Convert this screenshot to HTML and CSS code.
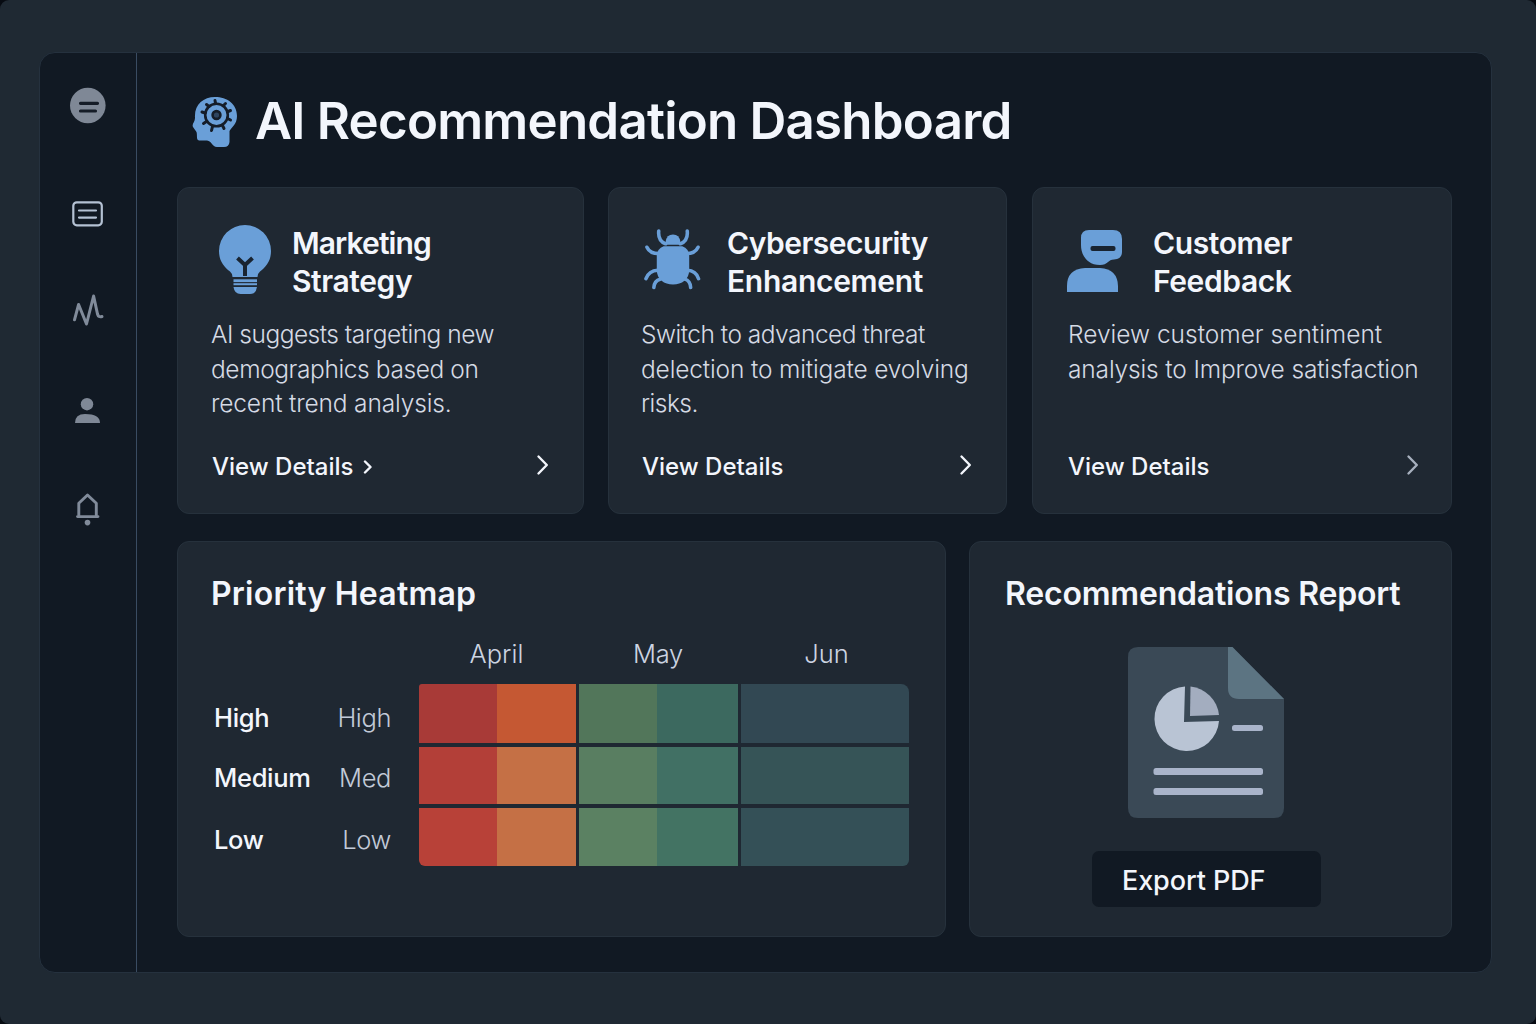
FILE: index.html
```html
<!DOCTYPE html>
<html lang="en">
<head>
<meta charset="utf-8">
<title>AI Recommendation Dashboard</title>
<link rel="stylesheet" href="styles.css">
</head>
<body>
<div class="screen">
<div class="app">
  <nav class="sidebar">
    <svg class="nav-icon" viewBox="0 0 40 40"><circle cx="19.8" cy="19.5" r="17.8" fill="#7f8896"/><path d="M12.500 17.300h17M12.500 25h15" stroke="#151c27" stroke-width="3.200" stroke-linecap="round"/></svg>
    <svg class="nav-icon nav-list" viewBox="0 0 40 40" fill="none" stroke="#b4c1d3" stroke-width="2.200" stroke-linecap="round"><rect x="5.300" y="8.300" width="28.500" height="23" rx="3.500"/><path d="M11 16.500h17M11 23.600h17"/></svg>
    <svg class="nav-icon nav-activity" viewBox="0 0 40 40" fill="none" stroke="#818b9a" stroke-width="3" stroke-linecap="round" stroke-linejoin="round"><path d="M6.500 29.800 10.600 14.500 18.500 34 25.600 6 29.500 24Q30.500 27.800 34 26.500"/></svg>
    <svg class="nav-icon nav-user" viewBox="0 0 40 40" fill="#7f8896"><circle cx="19" cy="13.200" r="6.200"/><path d="M7 32Q7 23 17 23Q32 23 32 32Z"/></svg>
    <svg class="nav-icon nav-bell" viewBox="0 0 40 40" fill="none" stroke="#818b9a" stroke-width="2.900" stroke-linecap="round" stroke-linejoin="round"><path d="M10.800 27.500V14.300L19.500 6l8.800 8.300v13.200M9.500 27.600h20.500"/><circle cx="19.500" cy="33.600" r="2.800" fill="#818b9a" stroke="none"/></svg>
  </nav>

  <main class="main">
    <header class="page-head">
      <svg class="head-icon" viewBox="0 0 46 52">
        <path d="M23 1C35 1 45 8 45 20C45 28 40 31 37.500 35V46Q37 51 32 51H25C20 51 20 45 15 44.500H7C4 44 5.500 39 4.500 36L1 31C-.5 28 3 26 3 22C2 9 11 1 23 1Z" fill="#6a9fd8"/>
        <g fill="none" stroke="#151d29"><circle cx="24.500" cy="19" r="11.300" stroke-width="2.600"/><path stroke-width="3" stroke-linecap="round" d="M23.500 7 23 4.500M31.500 9.500 33.500 7.500M36 15.500 38.500 14.500M35.500 22.500l3 1.500M30.500 29.500l1.500 3M20.500 30.500l-1 4M14.500 25.500l-3 2M13 17 10 16M17 10.500 14.500 8.500"/><circle cx="24.500" cy="19" r="3.900" stroke-width="2.600" fill="#2f4560"/></g>
      </svg>
      <h1 class="page-title">AI Recommendation Dashboard</h1>
    </header>

    <section class="cards">
      <article class="card rec rec-marketing">
        <div class="rec-head">
          <svg class="rec-icon bulb" viewBox="0 0 56 72">
            <g fill="#6a9fd8"><path d="M28 1A26 26 0 0 1 54 27C54 37 49 43 43 47.500Q40.500 49.500 40.500 53H15.500Q15.500 49.500 13 47.500C7 43 2 37 2 27A26 26 0 0 1 28 1Z"/><rect x="16.500" y="55.300" width="23.500" height="2.800"/><rect x="16.500" y="59.200" width="23.500" height="2"/><path d="M16.500 63H40Q39 70 33 70H23.500Q17.500 70 16.500 63Z"/></g>
            <path d="M20.500 34l7.500 7 7.500-7M28 41v11" fill="none" stroke="#192431" stroke-width="4"/>
          </svg>
          <h2 class="rec-title"><span class="t-marketing">Marketing</span><br><span class="t-strategy">Strategy</span></h2>
        </div>
        <p class="rec-text"><span class="tight">AI suggests targeting new</span><br><span class="snug">demographics based on</span><br><span class="near">recent trend analysis.</span></p>
        <a class="rec-link"><span>View Details</span><svg class="chev-small" viewBox="0 0 10 14"><path d="M2 1.500 7.500 7 2 12.500"/></svg><svg class="chev" viewBox="0 0 14 22"><path d="M2.500 2.500 10.800 11 2.500 19.500"/></svg></a>
      </article>

      <article class="card rec rec-security">
        <div class="rec-head">
          <svg class="rec-icon bug" viewBox="0 0 58 64">
            <g fill="none" stroke="#6a9fd8" stroke-width="3.600" stroke-linecap="round"><path d="M15 2.500Q14 12.500 22 15.500M44 2.500Q45 12.500 37 15.500M3 19Q6 25.500 15 25.500M55 19Q52 25.500 43 25.500M2 51Q5 43 14 42.500M55.500 51Q53 43 44 42.500M10 60Q10.500 53 16.500 51.500M47.500 60Q47 53 41.500 51.500"/></g>
            <path d="M22 16.500V13.500Q23 6 29.500 6T37 13.500V16.500Z" fill="#6a9fd8"/>
            <path d="M20 18H39Q46 20.500 46 28.500V42C46 52 38.500 57 29.500 57S13 52 13 42V28.500Q13 20.500 20 18Z" fill="#6a9fd8"/>
          </svg>
          <h2 class="rec-title"><span class="t-cyber">Cybersecurity</span><br><span class="t-enh">Enhancement</span></h2>
        </div>
        <p class="rec-text"><span class="tight">Switch to advanced threat</span><br><span class="near">delection to mitigate evolving</span><br><span class="tight">risks.</span></p>
        <a class="rec-link"><span>View Details</span><svg class="chev" viewBox="0 0 14 22"><path d="M2.500 2.500 10.800 11 2.500 19.500"/></svg></a>
      </article>

      <article class="card rec rec-customer">
        <div class="rec-head">
          <svg class="rec-icon person" viewBox="0 0 58 64" fill="#6a9fd8">
            <path d="M23 1H47Q56 1 56 10V23Q56 30 48 30.500C42 30.500 42 36 34 36C21 36 15 26 15 16V9Q15 1 23 1Z"/>
            <path d="M1 63V57Q1 40 19 39H34Q51.500 40 52 57V63Z"/>
            <rect x="24.500" y="17" width="25" height="5" rx="2" fill="#192431"/>
          </svg>
          <h2 class="rec-title"><span class="t-cust">Customer</span><br><span class="t-feed">Feedback</span></h2>
        </div>
        <p class="rec-text">Review customer sentiment<br><span class="near">analysis to Improve satisfaction</span></p>
        <a class="rec-link"><span>View Details</span><svg class="chev chev-dim" viewBox="0 0 14 22"><path d="M2.500 2.500 10.800 11 2.500 19.500"/></svg></a>
      </article>
    </section>

    <section class="bottom">
      <article class="card heat">
        <h2 class="panel-title heat-title">Priority Heatmap</h2>
        <div class="heatmap">
          <span></span><span></span><span class="month april">April</span><span class="month may">May</span><span class="month jun">Jun</span>
          <span class="lvl lvl-first">High</span><span class="sub lvl-first">High</span>
          <i class="cell a1"></i><i class="cell m1"></i><i class="cell j1"></i>
          <span class="lvl lvl-mid">Medium</span><span class="sub lvl-mid">Med</span>
          <i class="cell a2"></i><i class="cell m2"></i><i class="cell j2"></i>
          <span class="lvl lvl-last">Low</span><span class="sub lvl-last">Low</span>
          <i class="cell a3"></i><i class="cell m3"></i><i class="cell j3"></i>
        </div>
      </article>

      <article class="card report">
        <h2 class="panel-title report-title">Recommendations Report</h2>
        <svg class="doc" viewBox="0 0 156 171">
          <path d="M10 0H104L156 52V161Q156 171 146 171H10Q0 171 0 161V10Q0 0 10 0Z" fill="#3a4956"/>
          <path d="M100 0H104.500L156 52H111Q100 52 100 41Z" fill="#5c7482"/>
          <path d="M57 39.500A32.300 32.300 0 1 0 91 74L56 75Z" fill="#b9c4d4"/>
          <path d="M62.500 39.500A32 32 0 0 1 91 68L62 69Z" fill="#a3adbf"/>
          <g fill="#a9b4ca"><rect x="104" y="78" width="31" height="6" rx="2.500"/><rect x="25.500" y="121" width="109.500" height="7" rx="2.500"/><rect x="25.500" y="141" width="109.500" height="7" rx="2.500"/></g>
        </svg>
        <button class="export">Export PDF</button>
      </article>
    </section>
  </main>
</div>
</div>
</body>
</html>
```
FILE: styles.css
```css
* { box-sizing: border-box; margin: 0; }

body {
  background: #070b12;
  font-family: Inter, "Liberation Sans", sans-serif;
  color: #f3f6fc;
}

.screen {
  height: 1024px;
  padding: 52px 44px 51px 39px;
  border-radius: 9px;
  background: #1f2933;
  overflow: hidden;
}

.app {
  display: flex;
  height: 921px;
  border: 1px solid #25313e;
  border-radius: 16px;
  background: #111923;
}

.sidebar {
  width: 97px;
  flex: none;
  padding: 33px 0 0 28px;
  border-right: 1px solid #3a4c62;
}

.nav-icon { display: block; width: 40px; height: 40px; }
.nav-list { margin-top: 68px; }
.nav-activity { margin-top: 56px; }
.nav-user { margin-top: 61px; }
.nav-bell { margin-top: 58px; }

.main { flex: 1; padding: 37px 39px 0 40px; }

.page-head {
  display: flex;
  align-items: center;
  height: 60px;
  padding-left: 15px;
}
.head-icon { width: 46px; height: 52px; margin-top: 4px; }
.page-title {
  margin: 2px 0 0 17px;
  font-size: 51px;
  line-height: 60px;
  font-weight: 600;
  letter-spacing: -0.77px;
  white-space: nowrap;
}

.card {
  border: 1px solid #26313c;
  border-radius: 12px;
  background: #1f2832;
}

.cards {
  display: grid;
  grid-template-columns: 407px 400px 420px;
  column-gap: 24px;
  height: 327px;
  margin-top: 37px;
}
.rec {
  display: flex;
  flex-direction: column;
  padding: 36px 33px 32px;
}
.rec-security { margin-right: 1px; padding-left: 32px; }
.rec-customer { padding: 36px 31px 32px 35px; }
.rec-head { display: flex; height: 76px; }
.rec-icon { flex: none; display: block; }
.bulb { width: 56px; height: 72px; margin-left: 6px; }
.bug { width: 57px; height: 64px; margin: 4px 0 0 3px; }
.person { width: 58px; height: 64px; margin: 5px 0 0 -2px; }
.rec-title {
  font-size: 30px;
  line-height: 38px;
  font-weight: 600;
  white-space: nowrap;
}
.rec-marketing .rec-title { margin-left: 19px; }
.rec-security .rec-title { margin-left: 26px; }
.rec-customer .rec-title { margin-left: 29px; }
.t-marketing { letter-spacing: -0.9px; }
.t-strategy { letter-spacing: -0.4px; }
.t-cyber { letter-spacing: -0.5px; }
.t-enh { letter-spacing: -0.3px; }
.t-cust, .t-feed { letter-spacing: -0.4px; }

.rec-text {
  margin-top: 17px;
  font-size: 24.5px;
  line-height: 34.5px;
  font-weight: 300;
  color: #d5dae4;
  white-space: nowrap;
}
.tight { letter-spacing: -0.5px; }
.snug { letter-spacing: -0.4px; }
.near { letter-spacing: -0.15px; }

.rec-link {
  display: flex;
  align-items: center;
  height: 30px;
  margin-top: auto;
  padding-left: 1px;
  font-size: 24px;
  font-weight: 500;
}
.chev-small { width: 10px; height: 14px; margin: 2px 0 0 10px; }
.chev { width: 14px; height: 22px; margin: -2px 0 0 auto; }
.chev-small path, .chev path {
  fill: none;
  stroke: #f3f6fc;
  stroke-width: 2.4;
  stroke-linecap: round;
  stroke-linejoin: round;
}
.rec-customer .rec-link { padding-left: 0; }
.chev-dim path { stroke: #a7b0be; }

.bottom {
  display: grid;
  grid-template-columns: 769px 483px;
  justify-content: space-between;
  height: 396px;
  margin-top: 27px;
}
.panel-title {
  font-size: 32px;
  line-height: 40px;
  font-weight: 600;
  white-space: nowrap;
}
.heat-title { letter-spacing: 0.22px; }
.report-title { letter-spacing: -0.2px; }

.heat { padding: 32px 34px 0 33px; }
.heatmap {
  display: grid;
  grid-template-columns: 110px 89px 157px 159px 168px;
  grid-template-rows: 42px 59px 57px 58px;
  gap: 4px 3px;
  margin: 24px 0 0 3px;
}
.month {
  font-size: 25.5px;
  line-height: 32px;
  font-weight: 300;
  text-align: center;
  color: #ccd4e2;
}
.april { padding-right: 2px; }
.may { padding-right: 1px; letter-spacing: -0.3px; }
.jun { padding-left: 3px; }
.lvl, .sub { align-self: center; font-size: 25.5px; line-height: 32px; }
.lvl { font-weight: 500; letter-spacing: -0.3px; }
.sub { padding-right: 25px; text-align: right; font-weight: 300; letter-spacing: -0.4px; color: #c2cad8; }
.lvl-first { padding-top: 9px; }
.lvl-mid { padding-top: 4px; }
.lvl-last { padding-top: 5px; }

.a1 { background: linear-gradient(90deg, #a83a37 50%, #c55833 50%); border-radius: 3px 0 0 0; }
.a2 { background: linear-gradient(90deg, #b33f38 50%, #c57045 50%); }
.a3 { background: linear-gradient(90deg, #b84138 50%, #c57045 50%); border-radius: 0 0 0 6px; }
.m1 { background: linear-gradient(90deg, #52765a 49.3%, #3c695f 49.3%); }
.m2 { background: linear-gradient(90deg, #597e61 49.3%, #417064 49.3%); }
.m3 { background: linear-gradient(90deg, #5b8162 49.3%, #437363 49.3%); }
.j1 { background: #324853; border-radius: 0 8px 0 0; }
.j2 { background: #365457; }
.j3 { background: #345057; border-radius: 0 0 6px 0; }

.report { padding: 32px 35px 0; }
.doc { display: block; width: 156px; height: 171px; margin: 33px 0 0 123px; }
.export {
  display: block;
  width: 229px;
  height: 56px;
  margin: 33px 0 0 87px;
  padding: 3px 0 0 30px;
  border: 0;
  border-radius: 7px;
  background: #111923;
  font: 450 27px/53px Inter, "Liberation Sans", sans-serif;
  letter-spacing: -0.1px;
  text-align: left;
  color: #f3f6fc;
}
```
